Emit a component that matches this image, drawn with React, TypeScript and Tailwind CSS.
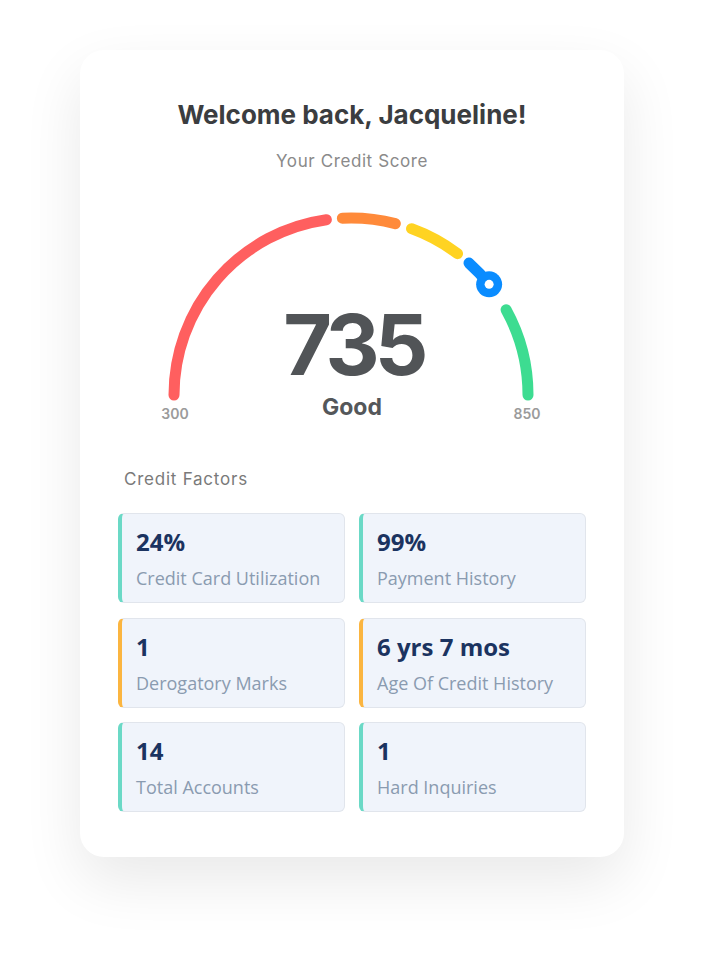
import React from "react";

const CX = 199;
const CY = 195;
const R = 177;

function pt(deg: number) {
  const r = (deg * Math.PI) / 180;
  return { x: CX - R * Math.cos(r), y: CY - R * Math.sin(r) };
}

function arc(a: number, b: number) {
  const p1 = pt(a);
  const p2 = pt(b);
  return `M ${p1.x.toFixed(2)} ${p1.y.toFixed(2)} A ${R} ${R} 0 0 1 ${p2.x.toFixed(2)} ${p2.y.toFixed(2)}`;
}

function Gauge() {
  const knob = pt(141.3);
  return (
    <div className="relative mx-auto mt-[27px] flex h-[225px] w-[400px] flex-col items-center pt-[103px]">
      <svg className="absolute inset-0" width="400" height="225" viewBox="0 0 400 225" fill="none">
        <path d={arc(0, 82)} stroke="#ff5f5f" strokeWidth="11" strokeLinecap="round" />
        <path d={arc(87.2, 104.5)} stroke="#ff8a3a" strokeWidth="11" strokeLinecap="round" />
        <path d={arc(110, 127)} stroke="#ffd322" strokeWidth="11" strokeLinecap="round" />
        <path d={arc(131.8, 141.3)} stroke="#0a8cff" strokeWidth="11" strokeLinecap="round" />
        <path d={arc(151.2, 180)} stroke="#3ddc91" strokeWidth="11" strokeLinecap="round" />
        <circle cx={knob.x} cy={knob.y} r="13" fill="#0a8cff" />
        <circle cx={knob.x} cy={knob.y} r="4.5" fill="#ffffff" />
      </svg>
      <div className="relative pl-[0.03em] text-[84px] font-bold leading-[84px] tracking-[-0.06em] text-[#515457] [font-family:Inter,sans-serif]">
        735
      </div>
      <div className="relative mt-[6px] text-[23px] font-bold leading-[28px] text-[#54575a] [font-family:Inter,sans-serif]">
        Good
      </div>
      <div className="absolute left-[3px] top-[204px] w-[40px] text-center text-[14px] font-semibold leading-[20px] text-[#9b9b9b] [font-family:Inter,sans-serif]">
        300
      </div>
      <div className="absolute left-[355px] top-[204px] w-[40px] text-center text-[14px] font-semibold leading-[20px] text-[#9b9b9b] [font-family:Inter,sans-serif]">
        850
      </div>
    </div>
  );
}

type Factor = { value: string; label: string; color: "teal" | "orange" };

const factors: Factor[] = [
  { value: "24%", label: "Credit Card Utilization", color: "teal" },
  { value: "99%", label: "Payment History", color: "teal" },
  { value: "1", label: "Derogatory Marks", color: "orange" },
  { value: "6 yrs 7 mos", label: "Age Of Credit History", color: "orange" },
  { value: "14", label: "Total Accounts", color: "teal" },
  { value: "1", label: "Hard Inquiries", color: "teal" },
];

function Tile({ f }: { f: Factor }) {
  return (
    <div
      className={
        "flex h-[90px] flex-col rounded-[6px] border border-l-4 border-[#e1e5ec] bg-[#f0f4fb] pl-[14px] pt-[12px] [font-family:'Open_Sans',sans-serif] " +
        (f.color === "teal" ? "border-l-[#6bd9c6]" : "border-l-[#fbb540]")
      }
    >
      <div className="text-[24px] font-bold leading-[32px] text-[#1b3360]">{f.value}</div>
      <div className="mt-[8px] text-[18px] leading-[24px] text-[#8a9bb0]">{f.label}</div>
    </div>
  );
}

export default function App() {
  return (
    <div className="min-h-[968px] w-full bg-white pt-[50px]">
      <div className="mx-auto flex w-[544px] flex-col rounded-[24px] bg-white px-[38px] pb-[45px] pt-[49px] shadow-[0_24px_60px_rgba(0,0,0,0.09)]">
        <h1 className="text-center text-[26px] font-bold leading-[32px] text-[#3b3d40] [font-family:Inter,sans-serif]">
          Welcome back, Jacqueline!
        </h1>
        <div className="mt-[18px] text-center text-[17px] leading-[24px] tracking-[0.035em] text-[#8a8a8a] [font-family:Inter,sans-serif]">
          Your Credit Score
        </div>
        <Gauge />
        <div className="mt-[42px] pl-[6px] text-[17px] leading-[24px] tracking-[0.045em] text-[#7a7a7a] [font-family:Inter,sans-serif]">
          Credit Factors
        </div>
        <div className="mt-[22px] grid grid-cols-2 gap-x-[14px] gap-y-[14.5px]">
          {factors.map((f, i) => (
            <Tile key={i} f={f} />
          ))}
        </div>
      </div>
    </div>
  );
}
